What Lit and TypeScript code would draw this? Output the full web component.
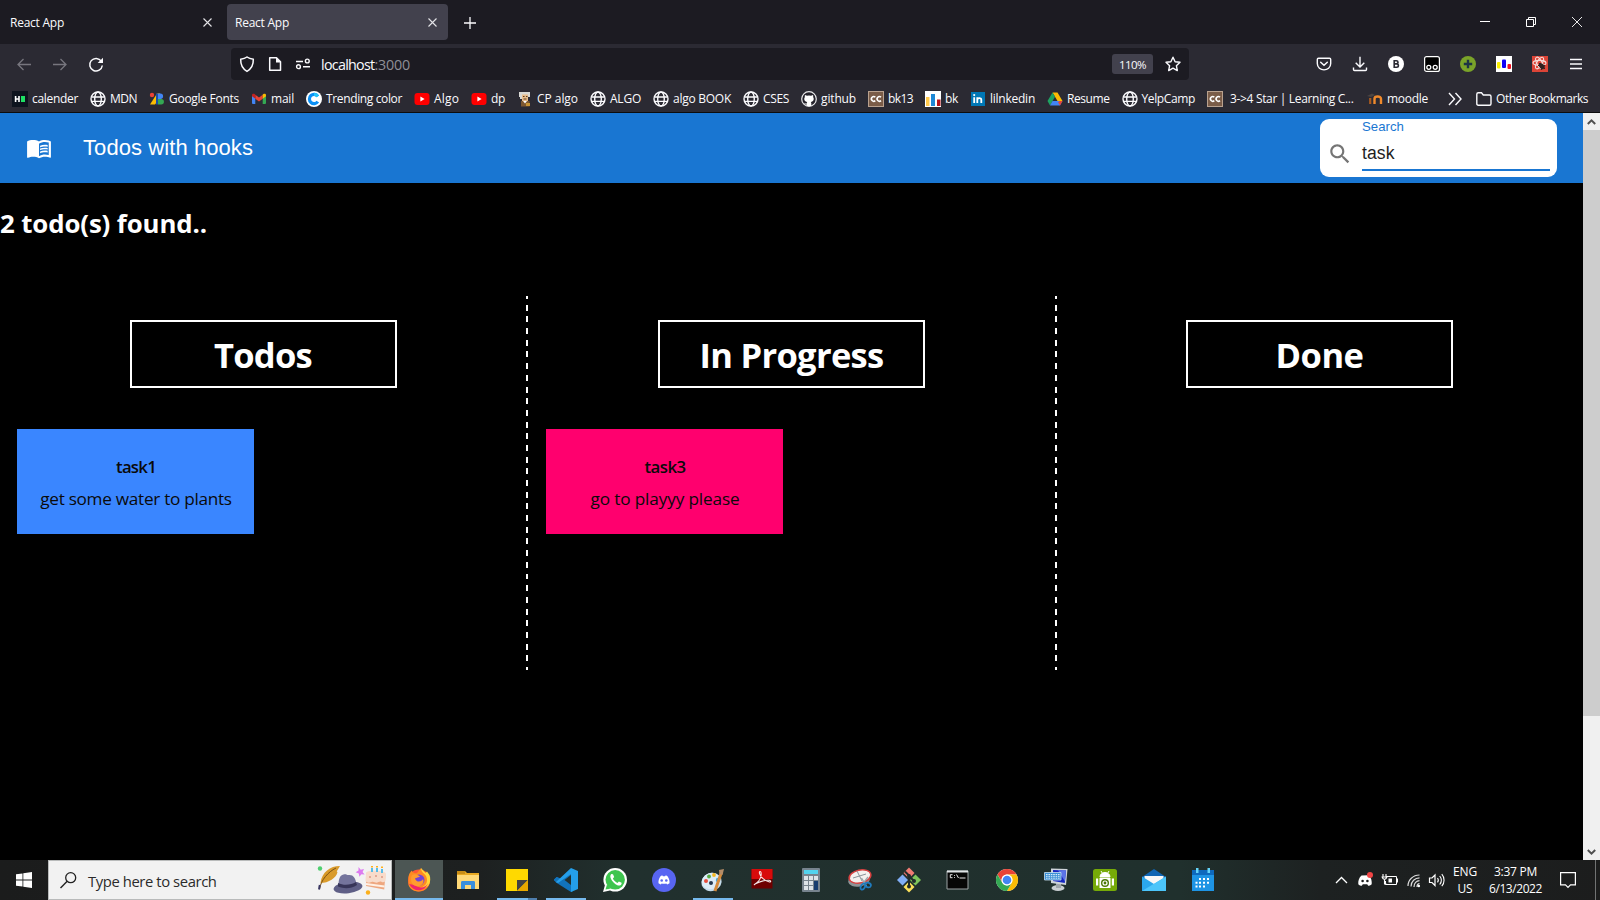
import { LitElement, html, css, svg } from "lit";
import { customElement } from "lit/decorators.js";

/** Base element: any node with data-w has its tracking adjusted so the run is exactly that wide. */
class FitElement extends LitElement {
  updated() {
    this.renderRoot.querySelectorAll<HTMLElement>("[data-w]").forEach((el) => {
      el.style.letterSpacing = "0px";
      const want = Number(el.dataset.w);
      const natural = el.getBoundingClientRect().width;
      const count = (el.textContent || "").length;
      el.style.letterSpacing = `${(want - natural) / count}px`;
    });
  }
}

const fit = (text: string, w: number, cls = "") =>
  html`<span class="fit ${cls}" data-w=${w}>${text}</span>`;

const shared = css`
  * { box-sizing: border-box; }
  svg { display: block; flex: none; overflow: visible; }
  .fit { display: inline-block; white-space: pre; flex: none; }
`;

const icon = (body: unknown, w = 16, h = 16, vb = `0 0 ${w} ${h}`) =>
  html`<svg width=${w} height=${h} viewBox=${vb} fill="none">${body}</svg>`;

const globe = svg`<g stroke="#fbfbfe" stroke-width="1.4"><circle cx="8" cy="8" r="7"/><ellipse cx="8" cy="8" rx="3.3" ry="7"/><path d="M1.4 6h13.2M1.4 10.4h13.2"/></g>`;
const youtube = svg`<rect x="0.5" y="2" width="15" height="12" rx="3" fill="#f00"/><path d="M6.4 5.6v4.8L10.6 8z" fill="#fff"/>`;
const codechef = svg`<rect width="16" height="16" fill="#7a5c48"/><rect x=".5" y=".5" width="15" height="15" stroke="#b9a18e"/><path d="M7.3 6.2A2.3 2.3 0 1 0 7.3 9.6M13 6.2A2.3 2.3 0 1 0 13 9.6" stroke="#fff" stroke-width="1.6"/>`;

const bookmarks: Array<[string, number, unknown]> = [
  ["calender", 46, svg`<rect width="16" height="16" fill="#0e141e"/><path d="M3.6 5v6M7 5v6M3.6 8H7" stroke="#fff" stroke-width="1.6"/><rect x="9" y="5" width="4" height="6" fill="#1ee063"/>`],
  ["MDN", 27, globe],
  ["Google Fonts", 70, svg`<circle cx="3" cy="4" r="2.2" fill="#ea4335"/><path d="M1 13.5L8 2.6h3V7L6 13.5z" fill="#fbbc04"/><path d="M7 2.6h2v10.8H7z" fill="#174ea6"/><path d="M9 2.6h2.4a2.7 2.7 0 0 1 0 5.4H9z" fill="#4285f4"/><path d="M9 8h3.2a2.7 2.7 0 0 1 0 5.4H9z" fill="#34a853"/>`],
  ["mail", 23, svg`<path d="M1 4.5V12a1 1 0 0 0 1 1h2.3V6.8z" fill="#4285f4"/><path d="M15 4.5V12a1 1 0 0 1-1 1h-2.3V6.8z" fill="#34a853"/><path d="M4.3 3.7L8 6.6l3.7-2.9v4L8 10.500 4.300 7.700z" fill="#ea4335"/><path d="M1 4.3C1 2.6 2.8 2.500 3.600 3.100l.7.6v4L1 5.300z" fill="#c5221f"/><path d="M15 4.300C15 2.600 13.200 2.500 12.400 3.100l-.7.6v4L15 5.300z" fill="#fbbc04"/>`],
  ["Trending color", 76, svg`<circle cx="8" cy="8" r="8" fill="#fff"/><path d="M11.800 5.400A4.600 4.600 0 1 0 11.800 10.600" stroke="#0a8ff5" stroke-width="3.200"/><path d="M11.800 5.400A4.600 4.600 0 0 0 8 3.400" stroke="#23c4f8" stroke-width="3.200"/>`],
  ["Algo", 25, youtube],
  ["dp", 14, youtube],
  ["CP algo", 41, svg`<path d="M2 1h11v5h-2V4H5v4H3V6H2z" fill="#d8d8d4"/><path d="M5 3.500h6V10H5z" fill="#e8bd8b"/><path d="M6 5.500h1.500M9 5.500h1.500M6.500 8h3" stroke="#5b3b20"/><path d="M4 10h8.500v5.500H4z" fill="#7d5730"/><path d="M6 10l2 2.500L10 10z" fill="#fff"/><path d="M9 12h4v3H9z" fill="#c79335"/>`],
  ["ALGO", 31, globe],
  ["algo BOOK", 58, globe],
  ["CSES", 26, globe],
  ["github", 35, svg`<circle cx="8" cy="8" r="7.300" fill="#24222b" stroke="#e8e8ea" stroke-width="1.200"/><path d="M4 4l2 .8a7 7 0 0 1 4 0L12 4c.4 1 .2 1.800.1 2 1.300 1.800.6 4.600-2.300 4.900.4.500.5 1 .5 1.700v2.400H5.700v-1.600c-2 .3-2-1.200-3-1.600 1.300 0 1.500 1.200 3 .8 0-.7.2-1.300.5-1.700-2.900-.3-3.600-3.100-2.300-4.900C3.800 5.800 3.600 5 4 4z" fill="#fff"/>`],
  ["bk13", 25, codechef],
  ["bk", 13, svg`<rect width="16" height="16" fill="#fff"/><rect x="1" y="6" width="3.500" height="9" fill="#ffc94d"/><rect x="6" y="3" width="4" height="12" fill="#1e88d6"/><rect x="12" y="8.500" width="3.500" height="6.500" fill="#b5121b"/>`],
  ["lilnkedin", 45, svg`<rect x="1" y="1" width="14" height="14" fill="#0077b5"/><path d="M4.200 6.300V12M7.300 6.300V12M7.300 9c0-2.300 4-2.700 4-.3V12" stroke="#fff" stroke-width="1.800"/><circle cx="4.200" cy="4.100" r="1.100" fill="#fff"/>`],
  ["Resume", 42.5, svg`<path d="M5.500 1.500h5L15.500 10h-5z" fill="#fbbc04"/><path d="M5.500 1.500L8 5.800 3 14.400.5 10z" fill="#1ea362"/><path d="M5.500 10h10L13 14.400H3z" fill="#4285f4"/><path d="M13 10h2.500L13 14.400 11 11z" fill="#ea4335"/>`],
  ["YelpCamp", 53.5, globe],
  ["3->4 Star | Learning C...", 123.5, codechef],
  ["moodle", 41, svg`<path d="M0 5l5-2.500L8 4 4 6z" fill="#4b4543"/><path d="M3.200 13V7" stroke="#a85a20" stroke-width="2.200"/><path d="M7.500 13V7.800c0-3 6.500-3 6.500 0V13" stroke="#f08a2c" stroke-width="2.400"/>`],
];

@customElement("browser-chrome")
class BrowserChrome extends FitElement {
  static styles = [shared, css`
    :host { display: block; box-sizing: border-box; flex: none; height: 113px; background: #2b2a33; color: #fbfbfe; font: 12px/16px "Open Sans", sans-serif; border-bottom: 1px solid #0c0c0d; }
    .tabs { height: 44px; background: #1c1b22; display: flex; align-items: center; padding: 0 18px 0 2px; }
    .tab { width: 221px; height: 36px; border-radius: 4px; display: flex; align-items: center; justify-content: space-between; padding: 0 11.500px 0 8px; margin-right: 4px; }
    .tab .fit { padding-top: 1px; }
    .active { background: #42414d; }
    .plus { margin-left: 12px; flex: none; padding-top: 1px; }
    .win { margin-left: auto; display: flex; gap: 36px; align-items: center; }
    .nav { height: 40px; display: flex; align-items: center; padding: 0 16px 0 17px; }
    .arrows { display: flex; gap: 22px; width: 214px; align-items: center; }
    .url { width: 958px; height: 32px; border-radius: 4px; background: #1c1b22; display: flex; align-items: center; padding: 0 8px 0 8px; font-size: 14.300px; }
    .url .addr { margin-left: 10px; padding-top: 1px; display: flex; }
    .port { color: #8f8e96; }
    .site { display: flex; gap: 12px; }
    .zoom { margin-left: auto; margin-right: 12px; width: 41px; height: 20px; background: #42414d; border-radius: 3px; font-size: 11.500px; display: flex; align-items: center; justify-content: center; padding-top: 1px; }
    .ext { margin-left: auto; display: flex; gap: 20px; }
    .marks { height: 29px; display: flex; align-items: center; padding: 0 12px; gap: 12px; }
    .mark { display: flex; gap: 4px; align-items: center; }
    .wide { gap: 7px; margin-right: 1.500px; }
    .more { margin-left: 8px; }
    .other { margin-left: auto; }
  `];

  render() {
    const x = icon(svg`<path d="M.5.5l8 8M8.500.5l-8 8" stroke="#e4e4e8" stroke-width="1.100"/>`, 9, 9);
    const s = "#fbfbfe";
    return html`
      <div class="tabs">
        <div class="tab">${fit("React App", 54)}${x}</div>
        <div class="tab active">${fit("React App", 54)}${x}</div>
        <div class="plus">${icon(svg`<path d="M6 0v12M0 6h12" stroke=${s} stroke-width="1.300"/>`, 12, 12)}</div>
        <div class="win">
          ${icon(svg`<path d="M0 4.500h10" stroke="#fff"/>`, 10, 10)}
          ${icon(svg`<path d="M.5 2.500h7v7h-7zM2.500 2.500v-2h7v7h-2" stroke="#fff"/>`, 10, 10)}
          ${icon(svg`<path d="M0 0l10 10M10 0L0 10" stroke="#fff" stroke-width=".9"/>`, 10, 10)}
        </div>
      </div>
      <div class="nav">
        <div class="arrows">
          ${icon(svg`<path d="M14 7.500H1M6.500 2L1 7.500 6.500 13" stroke="#77767e" stroke-width="1.300"/>`, 14, 15)}
          ${icon(svg`<path d="M0 7.500h13M7.500 2L13 7.500 7.500 13" stroke="#77767e" stroke-width="1.300"/>`, 14, 15)}
          ${icon(svg`<path d="M12.300 4.200A6.300 6.300 0 1 0 13.300 8.500" stroke=${s} stroke-width="1.500"/><path d="M14 .7V6H8.700z" fill=${s}/>`, 15, 15)}
        </div>
        <div class="url">
          <div class="site">
            ${icon(svg`<path d="M8 1C6.300 2.300 4 3 1.700 3.300 1.500 8.500 3 12.500 8 15.300c5-2.800 6.500-6.800 6.300-12C12 3 9.700 2.300 8 1z" stroke=${s} stroke-width="1.500"/>`)}
            ${icon(svg`<path d="M2.700 1.700h6.800l4 4v8.600H2.700z" stroke=${s} stroke-width="1.500" stroke-linejoin="round"/><path d="M9 1.500v5h5z" fill=${s}/>`)}
            ${icon(svg`<g stroke=${s} stroke-width="1.400"><path d="M1 5.500h7M8 10.700h7"/><circle cx="12.300" cy="5" r="1.900"/><circle cx="3.500" cy="10.700" r="1.900"/></g>`)}
          </div>
          <div class="addr">${fit("localhost", 53.5)}${fit(":3000", 35.5, "port")}</div>
          <div class="zoom">${fit("110%", 27)}</div>
          ${icon(svg`<path d="M8 1.200l2.100 4.500 4.900.6-3.600 3.400.9 4.900L8 12.200l-4.300 2.400.9-4.900L1 6.300l4.900-.6z" stroke=${s} stroke-width="1.400" stroke-linejoin="round"/>`)}
        </div>
        <div class="ext">
          ${icon(svg`<path d="M2.500 2.200h11c.8 0 1.200.4 1.200 1.200V7.500c0 8.500-13.400 8.500-13.400 0V3.400c0-.8.4-1.200 1.200-1.200z" stroke=${s} stroke-width="1.400"/><path d="M4.700 6.200L8 9.300l3.300-3.100" stroke=${s} stroke-width="1.500" stroke-linecap="round"/>`)}
          ${icon(svg`<path d="M8 .8v10M3.700 6.800L8 11l4.300-4.200M1.500 11.500v2c0 .7.3 1 1 1h11c.7 0 1-.3 1-1v-2" stroke=${s} stroke-width="1.400"/>`)}
          ${icon(svg`<circle cx="8" cy="8" r="8" fill="#fff"/><path d="M6.200 4.700h2.200a1.600 1.600 0 0 1 0 3.200H6.200zM6.200 7.900h2.500a1.700 1.700 0 0 1 0 3.400H6.200z" stroke="#2b2a33" stroke-width="1.600"/>`)}
          ${icon(svg`<rect x=".6" y=".6" width="14.800" height="14.800" rx="2" fill="#000" stroke="#fff" stroke-width="1.200"/><circle cx="4.800" cy="11.300" r="2" stroke="#fff" stroke-width="1.300"/><circle cx="11.200" cy="11.300" r="2" stroke="#fff" stroke-width="1.300"/>`)}
          ${icon(svg`<circle cx="8" cy="8" r="8" fill="#7aa329"/><path d="M8 3.800v8.400M3.800 8h8.400" stroke="#1d3345" stroke-width="2.400"/>`)}
          ${icon(svg`<rect width="16" height="16" fill="#fff"/><rect x="1" y="6" width="3.500" height="6.500" rx="1" fill="#fbf000"/><rect x="6" y="3.500" width="4" height="8.500" rx="1" fill="#1000f5"/><rect x="11.500" y="8" width="3.500" height="5" rx="1" fill="#f01020"/>`)}
          ${icon(svg`<rect width="16" height="16" fill="#dc4437"/><g stroke="#f6dcd8" stroke-width="1.100"><ellipse cx="7.500" cy="7" rx="6.500" ry="2.600"/><ellipse cx="7.500" cy="7" rx="6.500" ry="2.600" transform="rotate(60 7.500 7)"/><ellipse cx="7.500" cy="7" rx="6.500" ry="2.600" transform="rotate(120 7.500 7)"/></g><ellipse cx="9.800" cy="10.300" rx="2.400" ry="3.300" transform="rotate(-40 9.800 10.300)" fill="#30201f"/><path d="M6 10l3-3M9 14l4-5M7 7l6 6" stroke="#30201f"/>`)}
          ${icon(svg`<path d="M2 3.500h12M2 8h12M2 12.500h12" stroke=${s} stroke-width="1.300"/>`)}
        </div>
      </div>
      <div class="marks">
        ${bookmarks.map(([name, w, art]) => html`<div class="mark ${w > 100 ? "wide" : ""}">${icon(art)}${fit(name, w)}</div>`)}
        <div class="more">${icon(svg`<path d="M1 2l5.500 6L1 14M7.500 2L13 8l-5.500 6" stroke=${s} stroke-width="1.400"/>`)}</div>
        <div class="mark other">${icon(svg`<path d="M.8 3.300c0-1 .5-1.500 1.500-1.500h3.200L7.300 4h6.200c1 0 1.500.5 1.500 1.500v7.200c0 1-.5 1.500-1.500 1.500H2.300c-1 0-1.500-.5-1.500-1.500z" stroke=${s} stroke-width="1.400"/>`)}${fit("Other Bookmarks", 92)}</div>
      </div>`;
  }
}

interface Task { title: string; w: number; text: string; tw: number; tone: string; }
const columns: Array<{ name: string; w: number; tasks: Task[] }> = [
  { name: "Todos", w: 98, tasks: [{ title: "task1", w: 40, text: "get some water to plants", tw: 191.5, tone: "blue" }] },
  { name: "In Progress", w: 184, tasks: [{ title: "task3", w: 41, text: "go to playyy please", tw: 149, tone: "pink" }] },
  { name: "Done", w: 88, tasks: [] },
];

@customElement("todo-page")
class TodoPage extends FitElement {
  static styles = [shared, css`
    :host { display: flex; flex: none; height: 747px; background: #000; color: #fff; font-family: "Open Sans", sans-serif; }
    .page { width: 1583px; }
    .bar { height: 70px; background: #1976d2; display: flex; align-items: center; padding: 0 26px; font-family: "Liberation Sans", Arial, sans-serif; }
    .title { margin-left: 31px; font-size: 22px; line-height: 30px; }
    .search { margin-left: auto; width: 237px; height: 58px; border-radius: 9px; background: #fff; display: flex; padding: 0 7px 6px 7px; gap: 9px; }
    .glass { align-self: flex-end; padding-bottom: 4px; }
    .field { flex: 1; display: flex; flex-direction: column; border-bottom: 2px solid #1976d2; }
    .label { color: #1976d2; font-size: 13.200px; line-height: 15px; }
    .value { color: #1e1e1e; font-size: 17.600px; line-height: 26px; padding-top: 6px; }
    .found { margin: 0; font-size: 25.800px; line-height: 40px; font-weight: 700; padding-top: 20px; height: 113px; }
    .board { display: grid; grid-template-columns: 528px 529px 526px; height: 374px; }
    .col { display: flex; flex-direction: column; align-items: center; padding: 24px 1px 0 0; }
    .line { padding-right: 2px; background: repeating-linear-gradient(#fff 0 3px, transparent 3px 8.700px, #fff 8.700px 11.6875px) right top / 2px 100% no-repeat; }
    .head { width: 267px; height: 68px; border: 2px solid #fff; display: flex; align-items: center; justify-content: center; margin: 0 0 41px; font-size: 34.500px; font-weight: 700; line-height: 48px; padding-top: 2px; }
    .card { align-self: flex-start; margin-left: 17px; width: 237px; height: 105px; color: #0a0a0a; display: flex; flex-direction: column; align-items: center; padding: 22px 0 0 1px; font-size: 17.200px; line-height: 32px; }
    .col:nth-child(2) .card { margin-left: 18px; }
    .blue { background: #3a86ff; }
    .pink { background: #ff006e; }
    .name { font-weight: 600; font-size: 16.800px; }
    .scroll { width: 17px; background: #f0f0f0; display: flex; flex-direction: column; align-items: center; }
    .end { height: 17px; display: flex; align-items: center; }
    .thumb { width: 17px; height: 586px; background: #cdcdcd; margin-bottom: auto; }
  `];

  render() {
    return html`
      <div class="page">
        <div class="bar">
          <svg width="26" height="26" viewBox="0 0 24 24" fill="#fff"><path d="M21 5c-1.110-.35-2.330-.5-3.500-.5-1.950 0-4.050.4-5.500 1.500-1.450-1.100-3.550-1.500-5.500-1.500S2.450 4.900 1 6v14.650c0 .25.25.5.5.5.1 0 .15-.05.25-.05C3.100 20.450 5.050 20 6.500 20c1.950 0 4.050.4 5.500 1.500 1.350-.85 3.800-1.500 5.500-1.500 1.650 0 3.350.3 4.750 1.050.1.050.15.050.25.050.25 0 .5-.25.5-.5V6c-.6-.45-1.250-.75-2-1zm0 13.500c-1.100-.35-2.300-.5-3.500-.5-1.700 0-4.150.65-5.500 1.500V8c1.350-.85 3.800-1.500 5.500-1.500 1.200 0 2.400.15 3.500.5v11.500z"/><path d="M17.500 10.500c.88 0 1.730.09 2.500.26V9.240c-.79-.15-1.640-.24-2.500-.24-1.700 0-3.240.29-4.500.83v1.660c1.130-.64 2.700-.99 4.500-.99zM13 12.490v1.660c1.130-.64 2.700-.99 4.500-.99.88 0 1.730.09 2.500.26V11.900c-.79-.15-1.640-.24-2.500-.24-1.700 0-3.240.3-4.500.83zm4.500 1.840c-1.700 0-3.240.29-4.500.83v1.660c1.130-.64 2.700-.99 4.500-.99.88 0 1.730.09 2.500.26v-1.520c-.79-.16-1.640-.24-2.500-.24z"/></svg>
          <div class="title">${fit("Todos with hooks", 170)}</div>
          <div class="search">
            <div class="glass"><svg width="26" height="26" viewBox="0 0 24 24" fill="#757575"><path d="M15.500 14h-.79l-.28-.27C15.410 12.590 16 11.110 16 9.500 16 5.910 13.090 3 9.500 3S3 5.910 3 9.500 5.910 16 9.500 16c1.610 0 3.090-.59 4.230-1.570l.27.28v.79l5 4.990L20.490 19l-4.990-5zm-6 0C7.010 14 5 11.990 5 9.500S7.010 5 9.500 5 14 7.010 14 9.500 11.990 14 9.500 14z"/></svg></div>
            <div class="field"><div class="label">${fit("Search", 42)}</div><div class="value">${fit("task", 32.5)}</div></div>
          </div>
        </div>
        <h2 class="found">${fit("2 todo(s) found..", 207)}</h2>
        <div class="board">
          ${columns.map((c, i) => html`
            <div class="col ${i < 2 ? "line" : ""}">
              <h1 class="head">${fit(c.name, c.w)}</h1>
              ${c.tasks.map((t) => html`<div class="card ${t.tone}">${fit(t.title, t.w, "name")}${fit(t.text, t.tw)}</div>`)}
            </div>`)}
        </div>
      </div>
      <div class="scroll">
        <div class="end">${icon(svg`<path d="M.8 6L4.500 2.300 8.200 6" stroke="#505050" stroke-width="2"/>`, 9, 8)}</div>
        <div class="thumb"></div>
        <div class="end">${icon(svg`<path d="M.8 2L4.500 5.700 8.200 2" stroke="#505050" stroke-width="2"/>`, 9, 8)}</div>
      </div>`;
  }
}

const discordFace = "M8.500 8.200C9.600 7.700 10.300 7.600 10.500 7.600l.4.700c.8-.1 1.400-.1 2.200 0l.4-.7c.2 0 1 .1 2 .6 1.700 2.400 2.200 4.700 2 7.100-.9.700-1.800 1-2.400 1.200l-.7-1.100c-1.600.5-3.200.5-4.800 0l-.7 1.100c-.6-.2-1.500-.5-2.400-1.200-.2-2.400.3-4.700 2-7.100z";

const apps: Array<[string, unknown]> = [
  ["focus", svg`<circle cx="12" cy="12.500" r="11" fill="#ff5a36"/><path d="M1.500 9C2 5 4 4 4.500 2.500 5.500 5 8 5.500 10 5l4-5c1 4 9 5 9 13-1 12-18 14-21.500 4z" fill="#ff8a22"/><path d="M14 0c0 4 3 5 5 8 3 6-1 11-6 12 8 2 12-6 9.500-13L20 3.500 18.500 5z" fill="#ffd83a"/><path d="M2 16c5 9 16 8 19-1-2 5-9 6-13 2z" fill="#f0246b"/><circle cx="12" cy="12" r="5.500" fill="#7444d6"/><path d="M5 7c3-2 7 0 8 2-2-.2-3 1-5 1.200C9 15 15 14 16 11c2 5-3 8-7 7-5-1-6-7-4-11z" fill="#ff9c2e"/>`],
  ["", svg`<path d="M1 3h8l2 2h12v16H1z" fill="#e8a923"/><path d="M1 7h22v14H1z" fill="#ffd978"/><path d="M1 3h8v3H1z" fill="#c98d16"/><path d="M5 21v-6.500c0-1 .5-1.500 1.500-1.500h11c1 0 1.500.5 1.500 1.500V21h-4v-4H9v4z" fill="#3a8fdd"/>`],
  ["two", svg`<path d="M1 1h22v22H1z" fill="#ffd900"/><path d="M12 12h11L12 23z" fill="#434343"/><path d="M12 23h11V12z" fill="#e8a800"/>`],
  ["run", svg`<path d="M17 1L3 14.500 0 12.500v-1L2.500 9l3 1L19 23l-2 1z" fill="#1273bb"/><path d="M3 9L0 11.500l2 3L17 24V17z" fill="#1273bb"/><path d="M17 0L24 3v18l-7 3V6L4 15l-2-1z" fill="#249fea"/><path d="M17 7l-6.500 5 6.500 5z" fill="#22302f"/>`],
  ["", svg`<circle cx="12.200" cy="11.800" r="11.800" fill="#fff"/><path d="M0 24l2-7 5 5.500z" fill="#fff"/><circle cx="12.200" cy="11.800" r="9.700" fill="#3ec54f"/><path d="M2.500 21.500l1.500-5 4 4z" fill="#3ec54f"/><path d="M8.300 6c-3.600 3.300 4 12 8.300 11.500 1.500-.3 2.300-1.700 2-2.800l-2.700-1.300-1.500 1.500c-2.200-.9-3.500-2.200-4.500-4.300l1.300-1.500L10 6.200z" fill="#fff"/>`],
  ["", svg`<circle cx="12" cy="12" r="12" fill="#5865f2"/><path d=${discordFace} fill="#fff"/><circle cx="9.700" cy="12.500" r="1.300" fill="#5865f2"/><circle cx="14.300" cy="12.500" r="1.300" fill="#5865f2"/>`],
  ["run", svg`<ellipse cx="10.500" cy="14" rx="10.300" ry="9" transform="rotate(-20 10.500 14)" fill="#c5dcec"/><ellipse cx="10" cy="13" rx="9.300" ry="8" transform="rotate(-20 10 13)" fill="#dcecf7"/><circle cx="5" cy="13" r="2" fill="#e64d3c"/><circle cx="8" cy="8.500" r="1.900" fill="#55a941"/><circle cx="13" cy="7" r="1.900" fill="#f4b824"/><circle cx="17" cy="12" r="2.200" fill="#3fa8de"/><circle cx="10" cy="15" r="2" fill="#24384f"/><path d="M20.500 4L14 23" stroke="#d58a3a" stroke-width="3"/><path d="M18 2l5-1-1.500 6-3-1z" fill="#b48c67"/>`],
  ["", svg`<path d="M1.500 1h21v19.500h-21z" fill="#6e0000"/><path d="M1.500 1h21v10h-21z" fill="#d80b0b"/><path d="M4.500 16.500C9 13.500 12 9.500 11 4.500c-.4-1.700-2-1.200-1.500.8C10.500 9 14.500 13 19.500 14c1.800 0 1.500-1.700-.5-1.800-5-.2-9 1.300-13.500 3.500-1 .6-1.500 1.300-1 .8z" stroke="#f4e7e7" stroke-width="1.100"/>`],
  ["", svg`<rect x="3" y="0" width="18" height="24" rx="1" fill="#77838d"/><path d="M5 2h14v4H5z" fill="#53d3ee"/><path d="M5 8h4v4H5zM10 8h4v4h-4zM15 8h4v4h-4zM5 13h4v4H5zM10 13h4v4h-4zM5 18h4v4H5zM10 18h4v4h-4z" fill="#dde3e8"/><path d="M15 13h4v9h-4z" fill="#173d70"/>`],
  ["", svg`<ellipse cx="11" cy="12" rx="11" ry="6.500" transform="rotate(-10 11 12)" fill="#8c9396"/><ellipse cx="12" cy="8.500" rx="11" ry="6.500" transform="rotate(-12 12 8.500)" fill="#f4f1ee" stroke="#d84140" stroke-width="1.500"/><path d="M5 10L18 6M9 3l5 10" stroke="#8b9399"/><path d="M13.500 10l5 8M20 9l-7 9" stroke="#9ba4a9" stroke-width="1.300"/><g stroke="#1f7bbd" stroke-width="1.700"><ellipse cx="15" cy="18.500" rx="2" ry="3.400" transform="rotate(30 15 18.500)"/><ellipse cx="20" cy="17" rx="3" ry="2.300" transform="rotate(20 20 17)"/></g>`],
  ["", svg`<path d="M12-.5L17.500 5 12 10.500 6.500 5z" fill="#f17b74"/><path d="M5.500 6.500L11 12l-5.500 5.500L0 12z" fill="#81aef5"/><path d="M18.500 6.500L24 12l-5.500 5.500L13 12z" fill="#7fc45b"/><path d="M12 13.500L17.500 19 12 24.500 6.500 19z" fill="#fbe05a"/><path d="M8 3.500l4 4v11M12 8l5 5" stroke="#212b2b" stroke-width="2"/><circle cx="12" cy="8" r="2" fill="#212b2b"/><circle cx="17" cy="13" r="2" fill="#212b2b"/><circle cx="12" cy="18.500" r="2" fill="#212b2b"/>`],
  ["", svg`<path d="M1 3h21v18H1z" fill="#060606" stroke="#9da3a5"/><path d="M1 2.500h21v2H1z" fill="#dfe4e6"/><path d="M6.500 6.700H4.300v3h2.200M8.500 7v.8M8.500 9v.8M10.500 6.500l2 3.500M13.500 10h6" stroke="#e8e8e8"/>`],
  ["", svg`<circle cx="12" cy="12" r="11" fill="#fff"/><path d="M2.470 6.500A11 11 0 0 1 21.530 6.500H12A5.500 5.500 0 0 0 7.240 14.750z" fill="#ea4335"/><path d="M21.530 6.500A11 11 0 0 1 12 23l4.760-8.250A5.500 5.500 0 0 0 12 6.500z" fill="#fbbc05"/><path d="M12 23A11 11 0 0 1 2.470 6.500l4.770 8.250A5.500 5.500 0 0 0 16.760 14.750z" fill="#34a853"/><circle cx="12" cy="12" r="5.400" fill="#fff"/><circle cx="12" cy="12" r="4.300" fill="#4285f4"/>`],
  ["", svg`<ellipse cx="14" cy="20" rx="6.500" ry="3" fill="#c9ced2"/><path d="M12 14h5v6h-5z" fill="#9fa6ab"/><path d="M7 .5L23.500 1 22 17 7 15z" fill="#ced4da"/><path d="M9 2l13 .5-1.200 12.500L9 13z" fill="#1526c0"/><path d="M14 2.300l8 .2-1 11z" fill="#5b74e8"/><path d="M.5 4.500h16.500v7.500H.5z" fill="#3c91d6" stroke="#c8e1f4" stroke-width=".8"/><path d="M2 6.500h14M2 8.300h14M2 10.200h14" stroke="#d9ecf9" stroke-dasharray="1.600 .8"/>`],
  ["", svg`<rect x="0" y="1" width="24" height="22" rx="2.500" fill="#76aa08"/><path d="M7 9c0-6 10-6 10 0zM8 3l1.500 2.500M16 3l-1.500 2.500" fill="#fff" stroke="#fff"/><path d="M6.500 10h11v10h-11z" fill="#fff"/><path d="M3 10.500h2.200v7H3zM18.800 10.500H21v7h-2.200z" fill="#fff"/><circle cx="12" cy="15" r="4" fill="#4d7905"/><circle cx="12" cy="15" r="2" stroke="#fff" stroke-width="1.200"/>`],
  ["", svg`<path d="M0 9L12 1l12 8v14H0z" fill="#1065b4"/><path d="M2.500 8h19v8h-19z" fill="#f7f7f7"/><path d="M0 8.500L12 16 24 8.500V23H0z" fill="#2ba7ec"/><path d="M24 8.500V23H0z" fill="#4cc5fa"/>`],
  ["", svg`<path d="M1 3h22v20H1z" fill="#1e94e4"/><path d="M1 2h22v5H1z" fill="#0e69bd"/><path d="M5 0h2.500v5H5zM16.500 0H19v5h-2.500z" fill="#62d3fa"/><path d="M8 10h2v2H8zM12 10h2v2h-2zM16 10h2v2h-2zM4.500 13.700h2v2h-2zM8 13.700h2v2H8zM12 13.700h2v2h-2zM16 13.700h2v2h-2zM4.500 17.500h2v2h-2zM8 17.500h2v2H8zM12 17.500h2v2h-2z" fill="#fff"/>`],
];

@customElement("task-bar")
class TaskBar extends FitElement {
  static styles = [shared, css`
    :host { display: flex; flex: none; height: 40px; color: #fff; background: linear-gradient(90deg, #1b1c1c 0, #1d2020 480px, #21302e 620px, #20302d 1180px, #1d2121 1320px, #1c1d1d 1600px); font: 14.800px/20px "Open Sans", sans-serif; }
    .start { width: 48px; display: flex; align-items: center; justify-content: center; }
    .find { width: 344px; background: #f2f2f2; border: 1px solid #b9bbbb; display: flex; align-items: center; color: #2b2b2b; padding: 0 4px 0 11px; gap: 11px; margin-right: 3px; }
    .find .fit { padding-top: 1px; }
    .art { margin-left: auto; }
    .apps { display: flex; gap: 1px; }
    .app { width: 48px; display: flex; align-items: center; justify-content: center; }
    .focus { background: linear-gradient(#76b9ed, #76b9ed) bottom / 48px 2px no-repeat, #4c5654; }
    .run { background: linear-gradient(#76b9ed, #76b9ed) 4px 100% / 40px 2px no-repeat; }
    .two { background: linear-gradient(90deg, #76b9ed 31px, #4f7fae 31px) 4px 100% / 40px 2px no-repeat; }
    .tray { margin-left: auto; display: flex; align-items: center; gap: 8px; }
    .txt { display: flex; flex-direction: column; align-items: center; font-size: 12px; line-height: 17px; height: 40px; padding-top: 3px; }
    .clock { margin-left: 4px; }
    .note { margin-left: 10px; margin-right: 11px; }
    .desk { width: 5px; height: 40px; border-left: 1px solid #717373; }
  `];

  render() {
    return html`
      <div class="start">${icon(svg`<path d="M0 2.300l6.500-.9v6.200H0zM7.300 1.300L16 0v7.600H7.300zM0 8.400h6.500v6.200L0 13.700zM7.300 8.400H16V16l-8.700-1.200z" fill="#fff"/>`)}</div>
      <div class="find">
        ${icon(svg`<circle cx="10.700" cy="5.700" r="5" stroke="#222" stroke-width="1.300"/><path d="M7.200 9.200L.5 16" stroke="#222" stroke-width="1.400"/>`, 17, 17)}
        ${fit("Type here to search", 128.5)}
        <svg class="art" width="70" height="30" viewBox="0 0 70 30" fill="none">
          <circle cx="3" cy="3.500" r="2.200" fill="#4fcf70"/>
          <path d="M23 1C13 1 5 7 3.500 18c8 0 16-5 17-11-2 0 1-3 2.500-6z" fill="#d99b2b"/><path d="M19 3C11 7 4 15 2.500 24" stroke="#7c5115" stroke-width="1"/><path d="M2.800 20l-.8 4.500" stroke="#3a3763" stroke-width="2"/>
          <ellipse cx="31" cy="22.500" rx="14.500" ry="5.800" transform="rotate(-7 31 22.500)" fill="#5f5f86"/><path d="M21.500 21c0-6 1-11 5-11.500 3-.7 4 1 5 .5 5-.5 7 3 8 9-5 4-12 5-18 2z" fill="#74749c"/><path d="M21 18c6 3 13 2 18-1l1 3c-6 4-13 4-19 1.500z" fill="#373558"/>
          <path d="M41.500 2l2.200 2.800 3.300-.9-1.400 3 2 2.600-3.200-.3-2 2.500-.6-3.300-3.200-1.100 2.900-1.700z" fill="#dd7bf0"/>
          <path d="M49.500 8l19 1-1.300 15.500L49 21z" fill="#eea77f"/><path d="M49 8c0-3 20-3 20 1l-.5 7c-3 3-4-1-7 1s-4-1-7 0-4 1-6-1z" fill="#f8dccb"/><path d="M49 19l18.500 2.500" stroke="#fff0e4" stroke-width="2"/><path d="M55 7V3M60 7V3M65 8V4" stroke="#58bde7" stroke-width="2"/><path d="M55 2.500V1M60 2.500V1M65 3V1.500" stroke="#ffb11c" stroke-width="2"/><path d="M53 11v2M59 10v2M65 11v2" stroke="#d07a64"/>
          <circle cx="51" cy="27.500" r="2.200" fill="#fcb01b"/>
        </svg>
      </div>
      <div class="apps">${apps.map(([state, art]) => html`<div class="app ${state}">${icon(art, 24, 24)}</div>`)}</div>
      <div class="tray">
        ${icon(svg`<path d="M1 11L6.500 5.500 12 11" stroke="#fff" stroke-width="1.300"/>`, 14, 16)}
        ${icon(svg`<path d="M4.500 3.500l7-.2c3 2.500 3.500 6 3.200 9-1.300 1-2.500 1.500-3.500 1.500l-1-1.500H5.800l-1 1.500c-1 0-2.500-.5-3.500-1.500-.3-3.500.7-6.500 3.200-8.800z" fill="#fff"/><circle cx="5.600" cy="9" r="1.300" fill="#1d1f1f"/><circle cx="10.400" cy="9" r="1.300" fill="#1d1f1f"/><circle cx="13" cy="3" r="3" fill="#f14545"/>`)}
        ${icon(svg`<path d="M5 4.500h10.500v8H4.500V9M16.500 6.500v4" stroke="#fff"/><path d="M7.500 6.500h3.500v4H7.500z" fill="#fff"/><path d="M2 2v3M5 2v3M.5 5h6M1.500 5c0 3 4 3 4 0M3.500 7v5h2" stroke="#fff" stroke-width="1.100"/>`, 17, 16)}
        ${icon(svg`<g stroke="#dcdcdc" stroke-width="1.200"><path d="M2 14C2 8 7 3 13.500 3M5 14.500c0-5 4-8.700 8.500-8.700M8 15c0-3.700 2.500-6.300 5.500-6.300M11 15c0-2 1-3.400 2.500-3.400"/></g><circle cx="12.800" cy="14" r="1.300" fill="#fff"/>`, 14, 16)}
        ${icon(svg`<path d="M1.500 6H4l3-3v10.500l-3-3H1.500z" stroke="#fff" stroke-width="1.200"/><path d="M9.500 6c1 1.300 1 3 0 4.300M11.700 4c2 2.500 2 6 0 8.500M13.800 2.200c3 3.500 3 8.500 0 12" stroke="#fff" stroke-width="1.100"/>`, 17, 16)}
        <div class="txt lang">${fit("ENG", 24)}${fit("US", 15)}</div>
        <div class="txt clock">${fit("3:37 PM", 43)}${fit("6/13/2022", 53)}</div>
        <div class="note">${icon(svg`<path d="M.6.6h14.800v12.300H10.500L8 15.400l-2.500-2.500H.6z" stroke="#fff" stroke-width="1.200"/>`)}</div>
        <div class="desk"></div>
      </div>`;
  }
}

@customElement("app-root")
class AppRoot extends LitElement {
  static styles = css`
    :host { display: flex; flex-direction: column; width: 1600px; height: 900px; overflow: hidden; background: #000; }
  `;
  render() {
    return html`<browser-chrome></browser-chrome><todo-page></todo-page><task-bar></task-bar>`;
  }
}
